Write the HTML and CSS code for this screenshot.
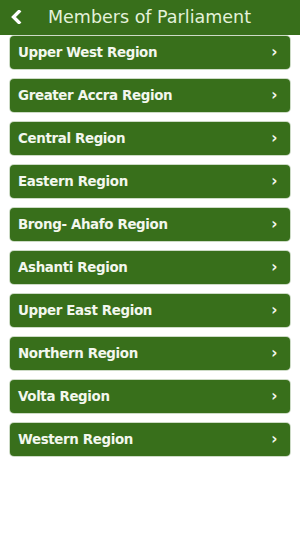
FILE: index.html
```html
<!DOCTYPE html>
<html lang="en">
<head>
    <meta charset="UTF-8">
    <meta name="viewport" content="width=device-width, initial-scale=1.0">
    <title>Members of Parliament</title>
    <link rel="stylesheet" href="styles.css">
</head>
<body>
    <div class="topbar">
        <span class="back">
            <svg width="12" height="14" viewBox="0 0 12 14"><path d="M9 1.5 L3.5 7 L9 12.5" fill="none" stroke="#fff" stroke-width="3.4" stroke-linecap="square"/></svg>
        </span>
        <h1>Members of Parliament</h1>
    </div>

    <div class="regions">
        <div class="region"><span>Upper West Region</span><span class="chev">›</span></div>
        <div class="region"><span>Greater Accra Region</span><span class="chev">›</span></div>
        <div class="region"><span>Central Region</span><span class="chev">›</span></div>
        <div class="region"><span>Eastern Region</span><span class="chev">›</span></div>
        <div class="region"><span>Brong- Ahafo Region</span><span class="chev">›</span></div>
        <div class="region"><span>Ashanti Region</span><span class="chev">›</span></div>
        <div class="region"><span>Upper East Region</span><span class="chev">›</span></div>
        <div class="region"><span>Northern Region</span><span class="chev">›</span></div>
        <div class="region"><span>Volta Region</span><span class="chev">›</span></div>
        <div class="region"><span>Western Region</span><span class="chev">›</span></div>
    </div>
</body>
</html>
```

FILE: styles.css
```css
:root {
    --green: #386f1b;
    --text: #f3f7ee;
}

* {
    margin: 0;
    padding: 0;
    box-sizing: border-box;
}

body {
    background: #ffffff;
    font-family: "DejaVu Sans", Verdana, sans-serif;
    width: 300px;
    min-height: 533px;
}

.topbar {
    height: 35px;
    background: var(--green);
    display: flex;
    align-items: center;
    padding-left: 10px;
}

.back {
    display: flex;
    width: 12px;
    height: 14px;
    margin-top: -2px;
}

.topbar h1 {
    font-size: 17.5px;
    font-weight: normal;
    color: #e4f1da;
    margin-left: 26px;
    margin-top: -1px;
}

.regions {
    display: flex;
    flex-direction: column;
    gap: 10px;
    padding: 1px 10px 0;
}

.region {
    height: 33px;
    background: var(--green);
    border-radius: 4px;
    box-shadow: 0 0 0 1px rgba(56, 111, 27, 0.25);
    display: flex;
    align-items: center;
    justify-content: space-between;
    padding: 0 13px 0 8px;
    color: var(--text);
    font-size: 13.4px;
    font-weight: bold;
    letter-spacing: -0.35px;
}

.chev {
    font-size: 15px;
    font-weight: bold;
    margin-top: -1px;
}
```
